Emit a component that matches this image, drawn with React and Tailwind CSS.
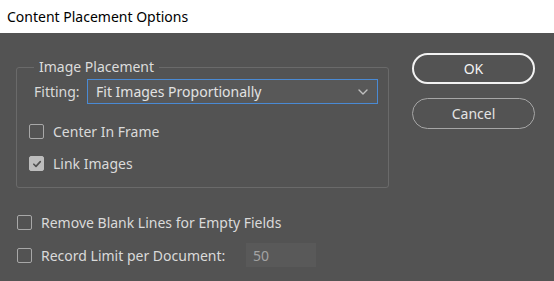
import React from "react";

function Box({ checked }) {
  return (
    <span
      className={
        "flex h-[15px] w-[15px] shrink-0 items-center justify-center rounded-[2px] border " +
        (checked ? "border-[#bdbdbd] bg-[#bdbdbd]" : "border-[#a8a8a8] bg-transparent")
      }
    >
      {checked && (
        <svg width="10" height="10" viewBox="0 0 10 10" fill="none">
          <path d="M1.8 5.2 L4 7.4 L8.3 2.6" stroke="#505050" strokeWidth="1.6" strokeLinecap="round" strokeLinejoin="round" />
        </svg>
      )}
    </span>
  );
}

export default function App() {
  return (
    <div className="w-[554px] h-[281px] overflow-hidden" style={{ fontFamily: '"Noto Sans", "Open Sans", sans-serif' }}>
      <div className="h-[33px] bg-white pl-[7px] flex items-center text-[14px] text-black">
        Content Placement Options
      </div>
      <div className="h-[248px] bg-[#535353] flex text-[14px] text-[#dadada]">
        <div className="w-[389px] pl-[16px] flex flex-col">
          <fieldset className="mt-[24px] h-[131px] border border-[#6a6a6a] rounded-[3px] pl-[17px]">
            <legend className="ml-0 px-[5px] leading-[20px] text-[#dcdcdc]">Image Placement</legend>
            <div className="mt-[2px] flex items-center h-[25px]">
              <span className="w-[53px]">Fitting:</span>
              <div className="w-[291px] h-[25px] border border-[#4a8ad4] bg-[#585858] flex items-center justify-between pl-[8px] pr-[8px] text-[#e2e2e2]">
                <span>Fit Images Proportionally</span>
                <svg width="12" height="8" viewBox="0 0 12 8" fill="none">
                  <path d="M2 2 L6 6 L10 2" stroke="#bfbfbf" strokeWidth="1.4" strokeLinecap="round" strokeLinejoin="round" />
                </svg>
              </div>
            </div>
            <div className="mt-[20px] -ml-[5px] flex items-center gap-[9px] h-[15px]">
              <Box />
              <span>Center In Frame</span>
            </div>
            <div className="mt-[17px] -ml-[5px] flex items-center gap-[9px] h-[15px]">
              <Box checked />
              <span>Link Images</span>
            </div>
          </fieldset>
          <div className="mt-[27px] ml-[1px] flex items-center gap-[9px] h-[15px]">
            <Box />
            <span>Remove Blank Lines for Empty Fields</span>
          </div>
          <div className="mt-[13px] ml-[1px] flex items-center h-[24px]">
            <Box />
            <span className="ml-[9px] w-[205px]">Record Limit per Document:</span>
            <div className="w-[70px] h-[24px] bg-[#595959] flex items-center pl-[7px] text-[#a3a3a3]">50</div>
          </div>
        </div>
        <div className="ml-[23px] flex flex-col pt-[20px]">
          <button className="w-[123px] h-[31px] rounded-full border-2 border-[#f2f2f2] text-[#f4f4f4] text-[14px] flex items-center justify-center">
            OK
          </button>
          <button className="mt-[14px] w-[123px] h-[31px] rounded-full border border-[#a6a6a6] text-[#e4e4e4] text-[14px] flex items-center justify-center">
            Cancel
          </button>
        </div>
      </div>
    </div>
  );
}
